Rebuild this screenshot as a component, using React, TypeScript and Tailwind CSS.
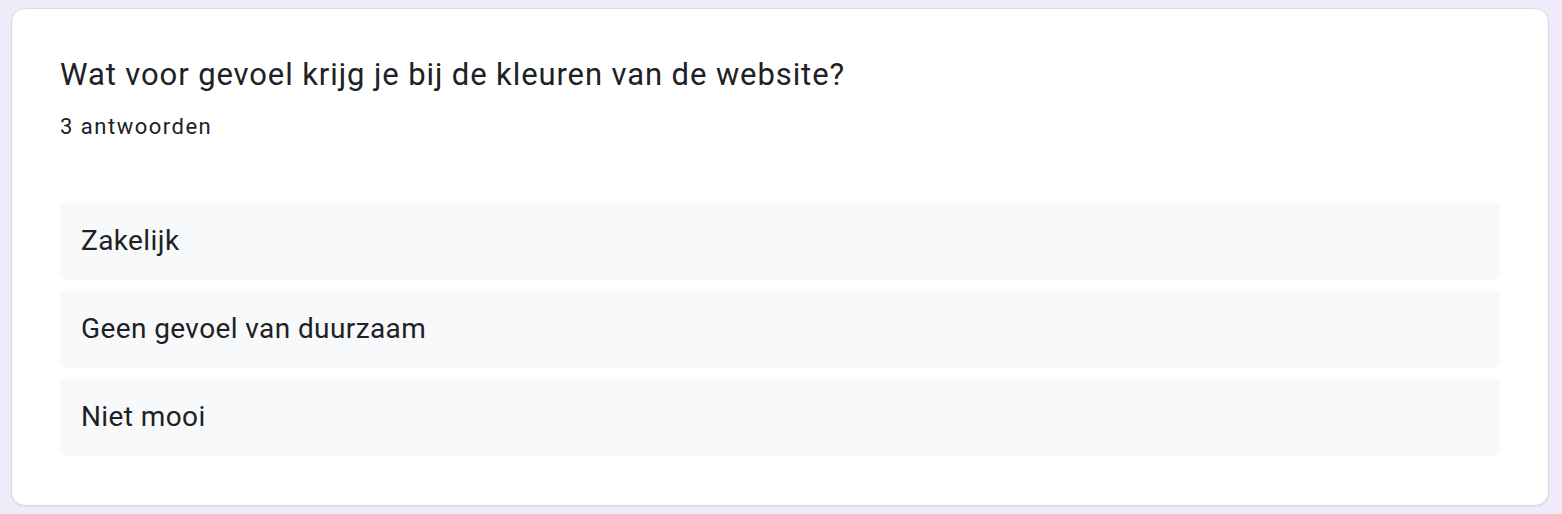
const answers = ["Zakelijk", "Geen gevoel van duurzaam", "Niet mooi"];

export default function App() {
  return (
    <div className="min-h-[514px] bg-[#f0ebf8] pl-[11px] pr-[13px] pt-[8px]">
      <div className="rounded-[14px] border border-[#dadce0] bg-white px-[48px] pb-[49px] pt-[47px] shadow-[0_1px_1px_rgba(60,64,67,0.08)]">
        <h2 className="text-[31px] leading-[37px] tracking-[0.9px] text-[#202124] font-['Roboto',sans-serif]">
          Wat voor gevoel krijg je bij de kleuren van de website?
        </h2>
        <div className="mt-[21px] text-[22px] leading-[26px] tracking-[1.5px] text-[#202124] font-['Roboto',sans-serif]">
          3 antwoorden
        </div>
        <div className="mt-[61px] flex flex-col gap-[9px]">
          {answers.map((a) => (
            <div
              key={a}
              className="flex h-[79px] items-center rounded-[8px] bg-[#f8f9fa] px-[21px] text-[28px] tracking-[0.4px] text-[#202124] font-['Roboto',sans-serif]"
            >
              {a}
            </div>
          ))}
        </div>
      </div>
    </div>
  );
}
